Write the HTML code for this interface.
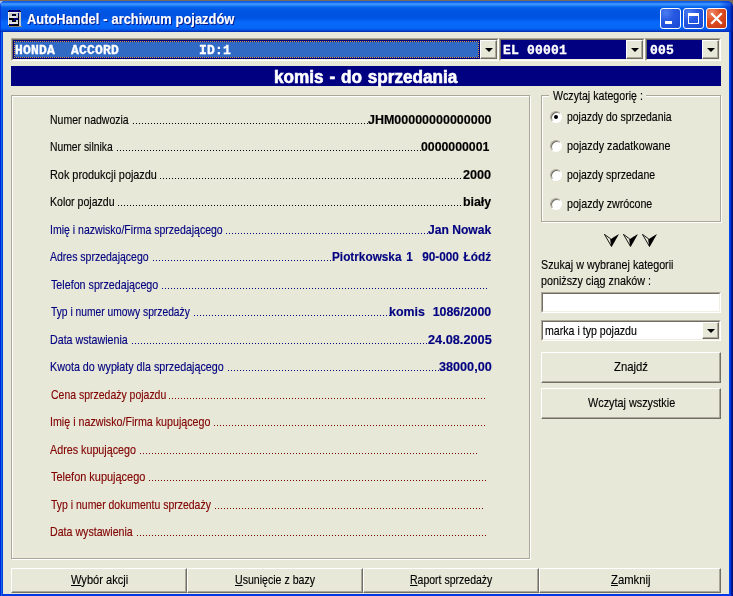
<!DOCTYPE html>
<html lang="pl"><head><meta charset="utf-8"><title>AutoHandel - archiwum pojazdów</title>
<style>
*{box-sizing:border-box;margin:0;padding:0}
html,body{width:733px;height:596px;overflow:hidden;background:#7a6c5a}
body{position:relative;font-family:"Liberation Sans",sans-serif;font-size:12px;color:#000}
.abs{position:absolute}
#layer{position:absolute;left:0;top:0;width:733px;height:596px;will-change:transform}
.t{position:absolute;white-space:nowrap;transform-origin:0 0;display:block;-webkit-text-stroke:0.15px currentColor}
#win{position:absolute;left:0;top:1px;width:733px;height:600px;border-radius:5px 6px 0 0;overflow:hidden;
 background:linear-gradient(90deg,#0025d8 0,#0025d8 1px,#1068ea 1px,#1068ea 2px,#0040d8 2px,#0040d8 3px,#0038e8 3px,#0038e8 729px,#0048ee 729px,#0048ee 730px,#0038e0 730px,#0038e0 731px,#00189c 731px,#00189c 732px,#001084 732px)}
#title{position:absolute;left:0;top:0;width:733px;height:31px;
 background:linear-gradient(180deg,#0a5be8 0px,#1668ee 1.5px,#3a90fb 2.5px,#3a90fb 4px,#1776f5 5px,#0461ea 6.5px,#0058e4 8.5px,#0053e0 14px,#0054e2 17px,#0460f2 19.5px,#0868fa 21.5px,#0566f8 27px,#0456e6 28.5px,#0445d2 29.5px,#0233b8 30.5px,#0233b8 31px);}
#title:after{content:"";position:absolute;right:0;top:0;width:14px;height:31px;background:linear-gradient(90deg,rgba(0,48,208,0) 0,rgba(0,48,208,.45) 7px,rgba(0,44,200,.6) 11px,rgba(0,24,156,.85) 12.5px,rgba(0,16,132,.95) 14px)}
#title:before{content:"";position:absolute;left:0;top:0;width:1px;height:31px;background:rgba(0,37,216,.6)}
#client{position:absolute;left:3px;top:31px;width:726px;height:562px;background:#e8e8d8}
.tb{position:absolute;z-index:2;top:7px;width:21px;height:21px;border:1px solid #fff;border-radius:3px;
 background:radial-gradient(circle at 25% 20%,#4c7ef0 0%,#2659e2 40%,#1a49d2 100%)}
.tb.close{background:radial-gradient(circle at 25% 20%,#ee8a68 0%,#e04e24 40%,#c63410 100%)}
.sunk{position:absolute;border:1px solid;border-color:#aca899 #fff #fff #aca899;}
.sunk>i{position:absolute;left:0;top:0;right:0;bottom:0;border:1px solid;border-color:#716f64 #f1efe2 #f1efe2 #716f64;display:block}
.mono{font-family:"Liberation Mono",monospace;font-weight:bold;font-size:13px;line-height:16px;color:#fff;white-space:pre;position:absolute;letter-spacing:0.2px;-webkit-text-stroke:0.35px #fff}
.ddb{position:absolute;width:17px;height:19px;background:#e8e8d8;border:1px solid;border-color:#fff #716f64 #716f64 #fff;box-shadow:inset -1px -1px 0 #aca899}
.ddb:after{content:"";position:absolute;left:4px;top:7px;border:4px solid transparent;border-top:4px solid #000;border-bottom:none;width:0;height:0}
.ddb.sm:after{top:6px}
.dots{position:absolute;height:1px;display:block;background:repeating-linear-gradient(to right,currentColor 0,currentColor 1px,transparent 1px,transparent 3px)}
.btn{position:absolute;background:#e8e8d8;border:1px solid;border-color:#fff #716f64 #716f64 #fff;box-shadow:inset -1px -1px 0 #aca899}
.etch{position:absolute;border:1px solid #aca899;box-shadow:1px 1px 0 #fff, inset 1px 1px 0 #fff}
.radio{position:absolute;width:12px;height:12px;border-radius:50%;background:#fff;border:1px solid;border-color:#aca899 #fff #fff #aca899;box-shadow:inset 1px 1px 0 #716f64}
.radio.on:after{content:"";position:absolute;left:3px;top:3px;width:4px;height:4px;border-radius:50%;background:#000}
u{text-decoration:underline}
</style></head><body>
<div id="layer">
<div class="abs" style="left:0;top:1px;width:4px;height:5px;background:#a9bdf2"></div>
<div id="win">
 <div id="title">
<svg class="abs" style="left:8px;top:9px" width="14" height="17" viewBox="0 0 14 17" shape-rendering="crispEdges">
 <rect x="1" y="16" width="13" height="1" fill="#8a8578"/>
 <rect x="0" y="0" width="13" height="16" fill="#c8c8c8"/>
 <rect x="0" y="0" width="13" height="2" fill="#000080"/><rect x="0" y="0" width="1" height="1" fill="#0050ee"/><rect x="12" y="0" width="1" height="1" fill="#0050ee"/>
 <rect x="0" y="1" width="1" height="1" fill="#000"/><rect x="12" y="1" width="1" height="1" fill="#000"/><rect x="1" y="0" width="1" height="1" fill="#000"/><rect x="11" y="0" width="1" height="1" fill="#000"/>
 <rect x="1" y="2" width="9" height="1" fill="#e8e8e8"/><rect x="0" y="2" width="1" height="13" fill="#efefef"/><rect x="2" y="6" width="6" height="2" fill="#e4e4e4"/><rect x="2" y="12" width="8" height="2" fill="#e4e4e4"/>
 <rect x="4" y="4" width="4" height="2" fill="#000"/><rect x="5" y="5" width="2" height="1" fill="#000080"/>
 <rect x="1" y="8" width="5" height="2" fill="#000"/><rect x="6" y="8" width="4" height="2" fill="#000080"/>
 <rect x="4" y="10" width="4" height="2" fill="#000"/><rect x="5" y="10" width="2" height="1" fill="#000080"/>
 <rect x="10" y="3" width="1" height="12" fill="#000"/><rect x="10" y="3" width="1" height="3" fill="#000080"/>
 <rect x="1" y="14" width="10" height="2" fill="#000"/><rect x="2" y="14" width="4" height="1" fill="#000080"/>
 <rect x="0" y="15" width="1" height="1" fill="#0050ee"/>
</svg>
  <span class="t" style="left:27.15px;top:9px;font-size:14px;line-height:18px;transform:scaleX(0.9208);word-spacing:0.39px;font-weight:bold;color:#fff;text-shadow:1px 1px 0 #0a1883;">AutoHandel - archiwum pojazdów</span>
  <div class="tb" style="left:660px"><svg width="19" height="19"><rect x="4" y="12" width="7" height="3" fill="#fff"/></svg></div>
  <div class="tb" style="left:683px"><svg width="19" height="19"><rect x="4.5" y="5.5" width="10" height="9" fill="none" stroke="#fff" stroke-width="1"/><rect x="4" y="4" width="11" height="3" fill="#fff"/></svg></div>
  <div class="tb close" style="left:706px"><svg width="19" height="19"><path d="M5 5l9 9M14 5l-9 9" stroke="#fff" stroke-width="2.2" stroke-linecap="square"/></svg></div>
 </div>
 <div id="client">
<div class="sunk" style="left:8px;top:6px;width:488px;height:23px;"><i></i><div class="abs" style="left:1px;top:1px;width:467px;height:19px;background:#000080"></div><div class="abs" style="left:2px;top:2px;width:465px;height:17px;background:#316ac5;box-shadow:inset 0 0 0 1px #101c8c;outline:1px dotted #d89c40;outline-offset:-1px"></div><div class="mono" style="left:3px;top:4px">HONDA  ACCORD          ID:1</div><div class="ddb" style="left:468px;top:1px"></div></div>
<div class="sunk" style="left:496px;top:6px;width:146px;height:23px;"><i></i><div class="abs" style="left:1px;top:1px;width:125px;height:19px;background:#000080"></div><div class="mono" style="left:3px;top:4px">EL 00001</div><div class="ddb" style="left:126px;top:1px"></div></div>
<div class="sunk" style="left:642px;top:6px;width:76px;height:23px;"><i></i><div class="abs" style="left:1px;top:1px;width:55px;height:19px;background:#000080"></div><div class="mono" style="left:4px;top:4px">005</div><div class="ddb" style="left:56px;top:1px"></div></div>
<div class="abs" style="left:8px;top:34px;width:710px;height:20px;background:#000080;"><span class="t" style="left:262.71px;top:0px;font-size:18px;line-height:22px;transform:scaleX(0.9529);word-spacing:1.11px;font-weight:bold;color:#fff;-webkit-text-stroke:0.6px #fff;">komis - do sprzedania</span></div>
<div class="etch" style="left:8px;top:63px;width:519px;height:464px;"><span class="t" style="left:38.29px;top:16px;font-size:13px;line-height:16px;transform:scaleX(0.8062);color:#000000;">Numer nadwozia</span> <i class="dots" style="left:121px;top:27px;width:235px;color:#000000"></i> <span class="t" style="left:355.87px;top:17px;font-size:12px;line-height:15px;transform:scaleX(1.0402);font-weight:bold;color:#000000;">JHM00000000000000</span>
<span class="t" style="left:38.30px;top:43px;font-size:13px;line-height:16px;transform:scaleX(0.7961);color:#000000;">Numer silnika</span> <i class="dots" style="left:105px;top:54px;width:304px;color:#000000"></i> <span class="t" style="left:409.49px;top:44px;font-size:12px;line-height:15px;transform:scaleX(1.0242);font-weight:bold;color:#000000;">0000000001</span>
<span class="t" style="left:38.26px;top:71px;font-size:13px;line-height:16px;transform:scaleX(0.8357);color:#000000;">Rok produkcji pojazdu</span> <i class="dots" style="left:148px;top:82px;width:301px;color:#000000"></i> <span class="t" style="left:451.30px;top:72px;font-size:12px;line-height:15px;transform:scaleX(1.0551);font-weight:bold;color:#000000;">2000</span>
<span class="t" style="left:38.29px;top:98px;font-size:13px;line-height:16px;transform:scaleX(0.8116);color:#000000;">Kolor pojazdu</span> <i class="dots" style="left:106px;top:109px;width:343px;color:#000000"></i> <span class="t" style="left:450.93px;top:99px;font-size:12px;line-height:15px;transform:scaleX(1.0302);font-weight:bold;color:#000000;">biały</span>
<span class="t" style="left:38.19px;top:126px;font-size:13px;line-height:16px;transform:scaleX(0.8104);color:#000080;">Imię i nazwisko/Firma sprzedającego</span> <i class="dots" style="left:214px;top:137px;width:202px;color:#000080"></i> <span class="t" style="left:415.87px;top:127px;font-size:12px;line-height:15px;transform:scaleX(1.0080);font-weight:bold;color:#000080;">Jan Nowak</span>
<span class="t" style="left:38.40px;top:153px;font-size:13px;line-height:16px;transform:scaleX(0.8074);color:#000080;">Adres sprzedającego</span> <i class="dots" style="left:141px;top:164px;width:178px;color:#000080"></i> <span class="t" style="left:320.06px;top:154px;font-size:12px;line-height:15px;transform:scaleX(0.9830);word-spacing:1.44px;font-weight:bold;color:#000080;">Piotrkowska 1&nbsp; 90-000 Łódź</span>
<span class="t" style="left:39.09px;top:181px;font-size:13px;line-height:16px;transform:scaleX(0.8247);color:#000080;">Telefon sprzedającego</span> <i class="dots" style="left:150px;top:192px;width:325px;color:#000080"></i>
<span class="t" style="left:39.10px;top:208px;font-size:13px;line-height:16px;transform:scaleX(0.7909);color:#000080;">Typ i numer umowy sprzedaży</span> <i class="dots" style="left:182px;top:219px;width:196px;color:#000080"></i> <span class="t" style="left:377.23px;top:209px;font-size:12px;line-height:15px;transform:scaleX(1.0326);word-spacing:0.47px;font-weight:bold;color:#000080;">komis&nbsp; 1086/2000</span>
<span class="t" style="left:38.28px;top:236px;font-size:13px;line-height:16px;transform:scaleX(0.8214);color:#000080;">Data wstawienia</span> <i class="dots" style="left:120px;top:247px;width:295px;color:#000080"></i> <span class="t" style="left:415.60px;top:237px;font-size:12px;line-height:15px;transform:scaleX(1.0611);font-weight:bold;color:#000080;">24.08.2005</span>
<span class="t" style="left:38.27px;top:263px;font-size:13px;line-height:16px;transform:scaleX(0.8263);color:#000080;">Kwota do wypłaty dla sprzedającego</span> <i class="dots" style="left:216px;top:274px;width:211px;color:#000080"></i> <span class="t" style="left:426.74px;top:264px;font-size:12px;line-height:15px;transform:scaleX(1.0532);font-weight:bold;color:#000080;">38000,00</span>
<span class="t" style="left:38.60px;top:291px;font-size:13px;line-height:16px;transform:scaleX(0.8056);color:#800000;">Cena sprzedaży pojazdu</span> <i class="dots" style="left:157px;top:302px;width:316px;color:#800000"></i>
<span class="t" style="left:38.18px;top:318px;font-size:13px;line-height:16px;transform:scaleX(0.8222);color:#800000;">Imię i nazwisko/Firma kupującego</span> <i class="dots" style="left:202px;top:329px;width:271px;color:#800000"></i>
<span class="t" style="left:38.40px;top:346px;font-size:13px;line-height:16px;transform:scaleX(0.8261);color:#800000;">Adres kupującego</span> <i class="dots" style="left:128px;top:357px;width:337px;color:#800000"></i>
<span class="t" style="left:39.09px;top:373px;font-size:13px;line-height:16px;transform:scaleX(0.8422);color:#800000;">Telefon kupującego</span> <i class="dots" style="left:137px;top:384px;width:337px;color:#800000"></i>
<span class="t" style="left:39.10px;top:401px;font-size:13px;line-height:16px;transform:scaleX(0.8045);color:#800000;">Typ i numer dokumentu sprzedaży</span> <i class="dots" style="left:203px;top:412px;width:268px;color:#800000"></i>
<span class="t" style="left:38.28px;top:428px;font-size:13px;line-height:16px;transform:scaleX(0.8180);color:#800000;">Data wystawienia</span> <i class="dots" style="left:125px;top:439px;width:349px;color:#800000"></i></div>
<div class="etch" style="left:538px;top:63px;width:180px;height:127px;"><div class="abs" style="left:7px;top:-3px;width:97px;height:5px;background:#e8e8d8"></div>
<span class="t" style="left:11.00px;top:-8px;font-size:13px;line-height:16px;transform:scaleX(0.8184);">Wczytaj kategorię :</span>
<div class="radio on" style="left:8px;top:15px"></div>
<span class="t" style="left:25.40px;top:13px;font-size:13px;line-height:16px;transform:scaleX(0.8039);">pojazdy do sprzedania</span>
<div class="radio" style="left:8px;top:44px"></div>
<span class="t" style="left:25.38px;top:42px;font-size:13px;line-height:16px;transform:scaleX(0.8267);">pojazdy zadatkowane</span>
<div class="radio" style="left:8px;top:73px"></div>
<span class="t" style="left:25.39px;top:71px;font-size:13px;line-height:16px;transform:scaleX(0.8074);">pojazdy sprzedane</span>
<div class="radio" style="left:8px;top:102px"></div>
<span class="t" style="left:25.39px;top:100px;font-size:13px;line-height:16px;transform:scaleX(0.8195);">pojazdy zwrócone</span></div>
<svg class="abs" style="left:601px;top:202px" width="54" height="14" viewBox="0 0 54 14">
 <g id="ar"><path d="M15 0 L10 3 L6.6 5.2 L7.5 13.3 Z" fill="#000"/><path d="M0.4 0.3 L6.8 5 L7.4 12.3 Z" fill="none" stroke="#000" stroke-width="0.9" stroke-linejoin="miter"/></g>
 <use href="#ar" x="19"/><use href="#ar" x="38"/>
</svg>
<span class="t" style="left:537.98px;top:225px;font-size:13px;line-height:16px;transform:scaleX(0.8258);">Szukaj w wybranej kategorii</span>
<span class="t" style="left:537.88px;top:241px;font-size:13px;line-height:16px;transform:scaleX(0.8275);">poniższy ciąg znaków :</span>
<div class="sunk" style="left:538px;top:260px;width:180px;height:21px;background:#fff;"><i></i></div>
<div class="sunk" style="left:538px;top:288px;width:180px;height:21px;background:#fff;"><i></i><span class="t" style="left:2.79px;top:2px;font-size:13px;line-height:16px;transform:scaleX(0.8153);">marka i typ pojazdu</span><div class="ddb sm" style="left:160px;top:1px;height:17px"></div></div>
<div class="btn" style="left:538px;top:320px;width:180px;height:31px;"><span class="t" style="left:72.17px;top:6px;font-size:13px;line-height:16px;transform:scaleX(0.8711);">Znajdź</span></div>
<div class="btn" style="left:538px;top:356px;width:180px;height:31px;"><span class="t" style="left:45.60px;top:6px;font-size:13px;line-height:16px;transform:scaleX(0.8327);">Wczytaj wszystkie</span></div>
<div class="btn" style="left:8px;top:536px;width:176px;height:25px;"><span class="t" style="left:59.00px;top:3px;font-size:13px;line-height:16px;transform:scaleX(0.8529);"><u>W</u>ybór akcji</span></div>
<div class="btn" style="left:184px;top:536px;width:176px;height:25px;"><span class="t" style="left:47.19px;top:3px;font-size:13px;line-height:16px;transform:scaleX(0.8144);"><u>U</u>sunięcie z bazy</span></div>
<div class="btn" style="left:360px;top:536px;width:176px;height:25px;"><span class="t" style="left:45.69px;top:3px;font-size:13px;line-height:16px;transform:scaleX(0.8079);"><u>R</u>aport sprzedaży</span></div>
<div class="btn" style="left:536px;top:536px;width:182px;height:25px;"><span class="t" style="left:70.67px;top:3px;font-size:13px;line-height:16px;transform:scaleX(0.8678);"><u>Z</u>amknij</span></div>
 </div>
</div>
</div>
</body></html>
